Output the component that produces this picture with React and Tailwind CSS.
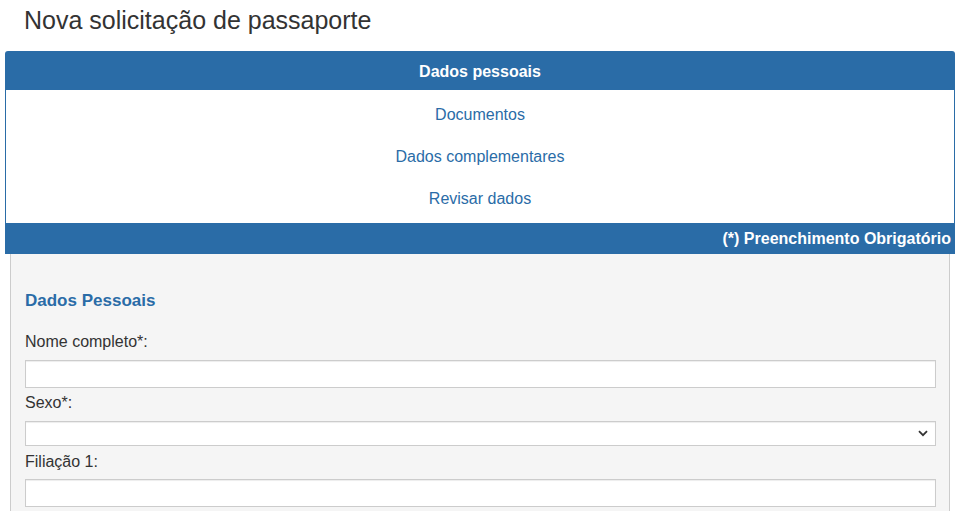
import React from "react";

function Label({ children, className = "" }) {
  return (
    <div className={"text-[16px] leading-[18px] text-[#333] " + className}>{children}</div>
  );
}

export default function App() {
  return (
    <div className="w-full min-h-[511px] bg-white text-[#333]" style={{ fontFamily: '"Liberation Sans", Arial, sans-serif' }}>
      <h1 className="pl-[24px] pt-[7px] mb-[18px] text-[25px] leading-[26px] font-normal text-[#333]">
        Nova solicitação de passaporte
      </h1>
      <div className="ml-[5px] w-[950px]">
        <div className="h-[39px] pt-[2px] rounded-t-[3px] bg-[#2a6ca7] flex items-center justify-center text-white font-bold text-[16px]">
          Dados pessoais
        </div>
        <div className="border-x border-[#2a6ca7] bg-white pt-[4px] pb-[3px]">
          {["Documentos", "Dados complementares", "Revisar dados"].map((t) => (
            <div key={t} className="h-[42px] flex items-center justify-center text-[16px] text-[#2a6ca7]">
              {t}
            </div>
          ))}
        </div>
        <div className="h-[31px] bg-[#2a6ca7] flex items-center justify-end pr-[4px] text-white font-bold text-[16px]">
          (*) Preenchimento Obrigatório
        </div>
        <div className="mx-[5px] border-x border-b border-[#cccccc] bg-[#f5f5f5] pl-[14px] pr-[13px] pt-[37px] pb-[20px]">
          <h4 className="text-[17px] leading-[20px] font-bold text-[#2a6ca7]">Dados Pessoais</h4>
          <Label className="mt-[22px]">Nome completo*:</Label>
          <div className="mt-[9px] h-[28px] border border-[#cccccc] bg-white shadow-[inset_0_1px_1px_rgba(0,0,0,0.075)]" />
          <Label className="mt-[6px]">Sexo*:</Label>
          <div className="relative mt-[9px] h-[25px] border border-[#cccccc] bg-white shadow-[inset_0_1px_1px_rgba(0,0,0,0.075)]">
            <svg className="absolute right-[7px] top-[8px]" width="10" height="7" viewBox="0 0 10 7">
              <path d="M1 1.2 L5 5.2 L9 1.2" fill="none" stroke="#333" strokeWidth="1.8" />
            </svg>
          </div>
          <Label className="mt-[7px]">Filiação 1:</Label>
          <div className="mt-[8px] h-[28px] border border-[#cccccc] bg-white shadow-[inset_0_1px_1px_rgba(0,0,0,0.075)]" />
        </div>
      </div>
    </div>
  );
}
